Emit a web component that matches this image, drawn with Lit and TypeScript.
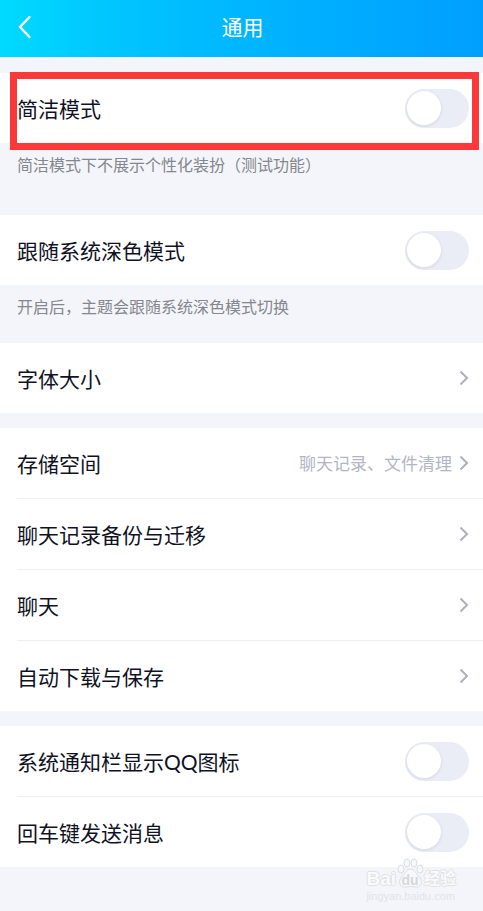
import { LitElement, html, css, svg, nothing } from "lit";
import { customElement, property } from "lit/decorators.js";

interface Row {
  id: string;
  label: string;
  kind: "switch" | "link";
  value?: string;
  marked?: boolean;
}

interface Group {
  rows: Row[];
  hint?: string;
  roomy?: boolean;
}

const groups: Group[] = [
  {
    rows: [{ id: "simple", label: "简洁模式", kind: "switch", marked: true }],
    hint: "简洁模式下不展示个性化装扮（测试功能）",
    roomy: true,
  },
  {
    rows: [{ id: "dark", label: "跟随系统深色模式", kind: "switch" }],
    hint: "开启后，主题会跟随系统深色模式切换",
  },
  { rows: [{ id: "font", label: "字体大小", kind: "link" }] },
  {
    rows: [
      { id: "storage", label: "存储空间", kind: "link", value: "聊天记录、文件清理" },
      { id: "backup", label: "聊天记录备份与迁移", kind: "link" },
      { id: "chat", label: "聊天", kind: "link" },
      { id: "download", label: "自动下载与保存", kind: "link" },
    ],
  },
  {
    rows: [
      { id: "tray", label: "系统通知栏显示QQ图标", kind: "switch" },
      { id: "enter", label: "回车键发送消息", kind: "switch" },
    ],
  },
];

@customElement("setting-row")
class SettingRow extends LitElement {
  @property({ attribute: false }) row!: Row;

  static styles = css`
    :host {
      display: block;
      position: relative;
    }
    .row {
      display: flex;
      align-items: center;
      min-height: 70px;
      box-sizing: border-box;
      padding: 0 14px 0 17px;
      color: #10121f;
      font-size: 21px;
      line-height: 30px;
      text-decoration: none;
    }
    .label {
      flex: 1;
      padding-top: 2px;
    }
    .value {
      padding-top: 2px;
      color: #b3b6c2;
      font-size: 17px;
      margin-right: 7px;
    }
    .chevron {
      width: 10px;
      height: 16px;
      fill: none;
      stroke: #adb0bb;
      stroke-width: 2;
    }
    .switch {
      appearance: none;
      display: flex;
      align-items: center;
      box-sizing: border-box;
      width: 64px;
      height: 39px;
      margin: 0;
      padding: 0 2px;
      border-radius: 20px;
      background: #eaecf6;
    }
    .switch::before {
      content: "";
      width: 34px;
      height: 34px;
      border-radius: 50%;
      background: #fff;
      box-shadow: 0 1px 2px 1px #dcdfe9;
    }
    .switch:checked {
      justify-content: flex-end;
      background: #00a5ff;
    }
    .mark {
      position: absolute;
      inset: -1px 4px -7px 10px;
      border: 7px solid #fc3838;
      pointer-events: none;
    }
  `;

  render() {
    const { id, label, kind, value, marked } = this.row;
    if (kind === "switch") {
      return html`
        <div class="row">
          <label class="label" for=${id}>${label}</label>
          <input class="switch" id=${id} type="checkbox" role="switch" />
        </div>
        ${marked ? html`<div class="mark"></div>` : nothing}
      `;
    }
    return html`
      <a class="row" href="#${id}">
        <span class="label">${label}</span>
        ${value ? html`<span class="value">${value}</span>` : nothing}
        <svg class="chevron" viewBox="0 0 10 16" aria-hidden="true">
          <path d="M1.500 1.500 8 8l-6.500 6.500" />
        </svg>
      </a>
    `;
  }
}

const toes = [
  [5, 11, 3, 4],
  [11, 5, 3, 4],
  [18, 5, 3, 4],
  [24, 11, 3, 4],
];

@customElement("app-root")
class AppRoot extends LitElement {
  static styles = css`
    :host {
      display: block;
      position: relative;
      min-height: 100vh;
      background: #f4f5fa;
      font-family: Lato, "Noto Sans CJK SC", sans-serif;
    }
    .bar {
      display: grid;
      grid-template-columns: 50px 1fr 48px;
      align-items: center;
      height: 57px;
      padding-bottom: 4px;
      box-sizing: border-box;
      background: linear-gradient(90deg, #00daff 0%, #00c4ff 25%, #00b1ff 60%, #009fff 100%);
      color: #fff;
    }
    .back {
      display: flex;
      align-items: center;
      height: 48px;
      padding: 0 0 0 18px;
      border: 0;
      background: none;
    }
    .back-icon {
      width: 14px;
      height: 24px;
      fill: none;
      stroke: #fff;
      stroke-width: 2.4;
      stroke-linecap: round;
    }
    .title {
      margin: 0;
      font-size: 21px;
      font-weight: 400;
      line-height: 30px;
      text-align: center;
    }
    .list {
      padding: 16px 0 44px;
    }
    .group {
      background: #fff;
    }
    .line {
      height: 1px;
      margin: 0 0 0 17px;
      border: 0;
      background: #eeeff2;
    }
    .gap {
      height: 15px;
    }
    .hint {
      box-sizing: border-box;
      min-height: 58px;
      margin: 0;
      padding: 10px 17px 0;
      color: #85878c;
      font-size: 16px;
      line-height: 24px;
    }
    .hint.roomy {
      min-height: 72px;
    }
    .watermark {
      position: absolute;
      right: 27px;
      bottom: 9px;
      color: #fafafc;
      text-shadow: 1px 0 #e0e1e5, -1px 0 #e0e1e5, 0 1px #e0e1e5, 0 -1px #e0e1e5;
      font-family: "Liberation Sans", "Noto Sans CJK SC", sans-serif;
      pointer-events: none;
    }
    .brand {
      display: flex;
      align-items: flex-end;
      font-size: 19px;
      font-weight: 700;
      line-height: 22px;
    }
    .cn {
      font-size: 16px;
    }
    .paw {
      display: grid;
      place-items: end center;
      width: 28px;
      height: 32px;
    }
    .paw-icon,
    .du {
      grid-area: 1 / 1;
    }
    .paw-icon {
      width: 28px;
      height: 32px;
      fill: #f7f8fa;
      stroke: #dcdde1;
    }
    .du {
      color: #d6d7dc;
      font-size: 14px;
      line-height: 20px;
      text-shadow: none;
    }
    .site {
      color: #e2e3e7;
      font-size: 11px;
      line-height: 12px;
      text-shadow: none;
    }
  `;

  renderGroup(group: Group, index: number) {
    return html`
      <section class="group">
        ${group.rows.map(
          (row, i) => html`
            ${i ? html`<hr class="line" />` : nothing}
            <setting-row .row=${row}></setting-row>
          `
        )}
      </section>
      ${group.hint
        ? html`<p class="hint ${group.roomy ? "roomy" : ""}">${group.hint}</p>`
        : index < groups.length - 1
          ? html`<div class="gap"></div>`
          : nothing}
    `;
  }

  render() {
    return html`
      <header class="bar">
        <button class="back" aria-label="返回">
          <svg class="back-icon" viewBox="0 0 14 24" aria-hidden="true">
            <path d="M11.500 2 2 12l9.500 10" />
          </svg>
        </button>
        <h1 class="title">通用</h1>
      </header>
      <main class="list">${groups.map((g, i) => this.renderGroup(g, i))}</main>
      <div class="watermark">
        <div class="brand">
          <span>Bai</span>
          <span class="paw">
            <svg class="paw-icon" viewBox="0 0 28 32" aria-hidden="true">
              ${toes.map(([x, y, rx, ry]) => svg`<ellipse cx=${x} cy=${y} rx=${rx} ry=${ry} />`)}
              <path d="M14.500 11c4 0 5 4 8 7 5 5 3 11-2 11-3 0-4-.5-6-.5s-3 .5-6 .5c-5 0-7-6-2-11 3-3 4-7 8-7z" />
            </svg>
            <span class="du">du</span>
          </span>
          <span class="cn">经验</span>
        </div>
        <div class="site">jingyan.baidu.com</div>
      </div>
    `;
  }
}
